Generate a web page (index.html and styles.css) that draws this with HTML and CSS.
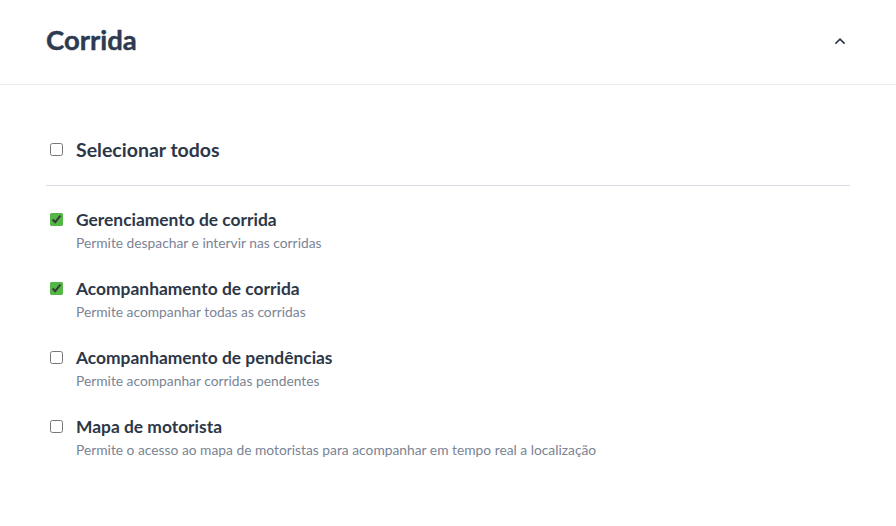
FILE: index.html
```html
<!DOCTYPE html>
<html lang="pt-BR">
<head>
<meta charset="utf-8">
<title>Corrida</title>
<link rel="stylesheet" href="styles.css">
</head>
<body>
<section class="panel">
  <header class="panel-header">
    <h2 class="panel-title">Corrida</h2>
    <button class="collapse-btn" aria-label="Recolher">
      <svg width="12" height="8" viewBox="0 0 12 8"><path d="M2 6 L6 2.2 L10 6" fill="none" stroke="#2d3748" stroke-width="1.7" stroke-linecap="square"/></svg>
    </button>
  </header>
  <div class="panel-body">
    <label class="select-all">
      <input type="checkbox">
      <span class="select-all-text">Selecionar todos</span>
    </label>
    <ul class="perm-list">
      <li class="perm">
        <input type="checkbox" checked>
        <div class="perm-text">
          <div class="perm-title">Gerenciamento de corrida</div>
          <div class="perm-desc">Permite despachar e intervir nas corridas</div>
        </div>
      </li>
      <li class="perm">
        <input type="checkbox" checked>
        <div class="perm-text">
          <div class="perm-title">Acompanhamento de corrida</div>
          <div class="perm-desc">Permite acompanhar todas as corridas</div>
        </div>
      </li>
      <li class="perm">
        <input type="checkbox">
        <div class="perm-text">
          <div class="perm-title">Acompanhamento de pendências</div>
          <div class="perm-desc">Permite acompanhar corridas pendentes</div>
        </div>
      </li>
      <li class="perm">
        <input type="checkbox">
        <div class="perm-text">
          <div class="perm-title">Mapa de motorista</div>
          <div class="perm-desc">Permite o acesso ao mapa de motoristas para acompanhar em tempo real a localização</div>
        </div>
      </li>
    </ul>
  </div>
</section>
</body>
</html>
```

FILE: styles.css
```css
* { box-sizing: border-box; }
html, body { margin: 0; padding: 0; background: #fff; }
body {
  font-family: Lato, "Open Sans", "Liberation Sans", sans-serif;
  color: #2d3748;
}
.panel { width: 896px; }
.panel-header {
  height: 85px;
  border-bottom: 1px solid #e7eaee;
  display: flex;
  align-items: center;
  justify-content: space-between;
  padding: 0 46px 2px 46px;
}
.panel-title {
  margin: 0 0 2px 0;
  font-size: 27.5px;
  font-weight: 700;
  line-height: 30px;
  color: #2d3a4f;
  -webkit-text-stroke: 0.4px #2d3a4f;
}
.collapse-btn {
  border: 0;
  background: none;
  padding: 0;
  margin-right: 2px;
  width: 16px;
  height: 16px;
  display: flex;
  align-items: center;
  justify-content: center;
}
.panel-body { padding: 51px 46px 0 46px; }
input[type="checkbox"] {
  width: 13px;
  height: 13px;
  margin: 0 13px 0 4px;
  accent-color: #52b744;
  flex: none;
}
.select-all {
  display: flex;
  align-items: center;
  height: 26px;
  box-sizing: content-box;
  padding-bottom: 23px;
  border-bottom: 1px solid #d8dce2;
}
.select-all-text {
  font-size: 19.5px;
  font-weight: 700;
  color: #2d3748;
}
.perm-list { list-style: none; margin: 0; padding: 23px 0 0 0; }
.perm { display: flex; align-items: flex-start; height: 69px; }
.perm input[type="checkbox"] { margin-top: 4px; }
.perm-title {
  font-size: 17.4px;
  font-weight: 700;
  line-height: 22px;
  color: #2d3748;
}
.perm-desc {
  margin-top: 2px;
  font-size: 13.8px;
  line-height: 20px;
  color: #7a8494;
}
```
